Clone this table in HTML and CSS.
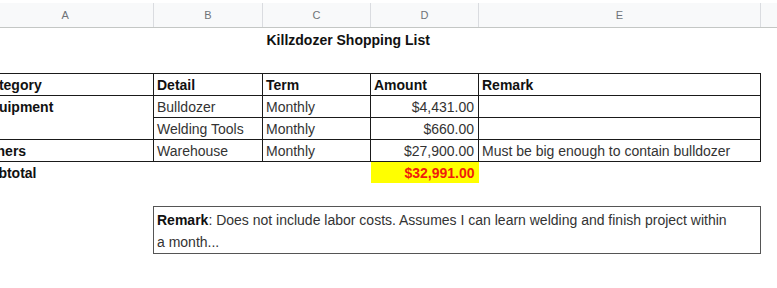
FILE: index.html
```html
<!DOCTYPE html>
<html>
<head>
<meta charset="utf-8">
<link rel="stylesheet" href="styles.css">
</head>
<body>
<div class="wrap">
<table class="sheet">
  <colgroup>
    <col class="ca"><col class="cb"><col class="cc"><col class="cd"><col class="ce"><col class="cf">
  </colgroup>
  <tr class="colhead">
    <th>A</th><th>B</th><th>C</th><th>D</th><th>E</th><th></th>
  </tr>
  <tr class="r-title">
    <td></td><td></td><td colspan="3" class="title">Killzdozer Shopping List</td><td></td>
  </tr>
  <tr class="r-blank"><td></td><td></td><td></td><td></td><td></td><td></td></tr>
  <tr class="r">
    <td class="b bold">Category</td>
    <td class="b bold">Detail</td>
    <td class="b bold">Term</td>
    <td class="b bold">Amount</td>
    <td class="b bold">Remark</td>
    <td></td>
  </tr>
  <tr class="r">
    <td class="b bold top" rowspan="2">Equipment</td>
    <td class="b">Bulldozer</td>
    <td class="b">Monthly</td>
    <td class="b num">$4,431.00</td>
    <td class="b"></td>
    <td></td>
  </tr>
  <tr class="r">
    <td class="b">Welding Tools</td>
    <td class="b">Monthly</td>
    <td class="b num">$660.00</td>
    <td class="b"></td>
    <td></td>
  </tr>
  <tr class="r">
    <td class="b bold">Others</td>
    <td class="b">Warehouse</td>
    <td class="b">Monthly</td>
    <td class="b num">$27,900.00</td>
    <td class="b">Must be big enough to contain bulldozer</td>
    <td></td>
  </tr>
  <tr class="r">
    <td class="bold">Subtotal</td>
    <td></td>
    <td></td>
    <td class="num total">$32,991.00</td>
    <td></td>
    <td></td>
  </tr>
  <tr class="r-gap"><td></td><td></td><td></td><td></td><td></td><td></td></tr>
  <tr class="r-remark">
    <td></td>
    <td colspan="4" class="remark"><strong>Remark</strong>: Does not include labor costs. Assumes I can learn welding and finish project within a month...</td>
    <td></td>
  </tr>
</table>
</div>
</body>
</html>
```
FILE: styles.css
```css
html, body {
  margin: 0;
  padding: 0;
  background: #ffffff;
  overflow: hidden;
}
.wrap {
  padding-top: 3px;
  width: 777px;
  overflow: hidden;
}
.sheet {
  margin-left: -23px;
  border-collapse: collapse;
  table-layout: fixed;
  width: 903px;
  font-family: "Liberation Sans", Arial, sans-serif;
  font-size: 14px;
  color: #333333;
}
.ca { width: 176px; }
.cb { width: 109px; }
.cc { width: 108px; }
.cd { width: 108px; }
.ce { width: 282px; }
.cf { width: 120px; }

.sheet td, .sheet th {
  padding: 0 3px;
  white-space: nowrap;
  overflow: hidden;
}
.colhead th {
  height: 24px;
  background: #f8f9fa;
  border-right: 1px solid #dadce0;
  border-bottom: 1px solid #c4c7c5;
  font-size: 11px;
  font-weight: normal;
  color: #6f7378;
  text-align: center;
}
.r-title td {
  height: 24px;
}
.title {
  font-weight: bold;
  color: #111111;
  padding-left: 4px !important;
  overflow: visible;
}
.r-blank td {
  height: 21px;
}
.r-gap td {
  height: 23px;
}
.r td {
  height: 21px;
  vertical-align: middle;
}
.b {
  border: 1px solid #1a1a1a;
}
.bold {
  font-weight: bold;
  color: #111111;
}
.top {
  vertical-align: top !important;
  padding-top: 3px !important;
}
.num {
  text-align: right;
  padding-right: 4px !important;
}
.total {
  background: #ffff00;
  color: #f01c0c;
  font-weight: bold;
}
.r-remark td {
  height: 42px;
}
.remark {
  border: 1px solid #555555;
  white-space: normal !important;
  line-height: 22px;
  vertical-align: top;
  padding: 2px 32px 0 3px !important;
}
.remark strong {
  color: #111111;
}
```
